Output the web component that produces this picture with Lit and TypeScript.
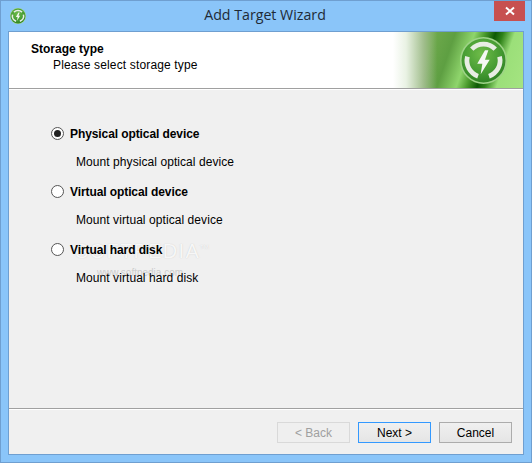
import { LitElement, html, css, svg } from "lit";
import { customElement } from "lit/decorators.js";

const bolt = (size: number, id: string) => html`<svg width=${size} height=${size} viewBox="0 0 60 60">
  <defs>
    <radialGradient id=${id} cx="45%" cy="35%" r="70%">
      <stop offset="0" stop-color="#6fbc49"/>
      <stop offset=".6" stop-color="#469c33"/>
      <stop offset="1" stop-color="#2c7f22"/>
    </radialGradient>
  </defs>
  <circle cx="30" cy="30" r="30" fill="#9fd388"/>
  <circle cx="30" cy="30" r="28" fill=${`url(#${id})`}/>
  ${svg`<g fill="none" stroke="#e8ede4" stroke-width="6">
    <path d="M15 15.5A21 21 0 0 1 45 15.5"/>
    <path d="M9.5 25A21 21 0 0 0 23 50"/>
    <path d="M50.5 25A21 21 0 0 1 37 50"/>
  </g>
  <path d="M31.9 17L22 34H28.5L26.4 47.7L37.9 29H31.9L36.2 17Z" fill="#f6f8f4"/>`}
</svg>`;

@customElement("app-root")
export class AppRoot extends LitElement {
  static styles = css`
    :host {
      display: block;
      width: 532px;
      height: 463px;
      font-family: "Liberation Sans", Arial, sans-serif;
      font-size: 12px;
      color: #000;
    }
    .window {
      box-sizing: border-box;
      width: 532px;
      height: 463px;
      display: flex;
      flex-direction: column;
      background: #8ac5f9;
      border: 1px solid #6f9fd0;
      padding: 0 7px 7px;
    }
    .titlebar {
      flex: none;
      height: 30px;
      display: grid;
      grid-template-columns: 1fr auto 1fr;
      align-items: start;
    }
    .app-icon {
      display: flex;
      margin: 7px 0 0 2px;
    }
    .title {
      font-family: "Open Sans", sans-serif;
      font-size: 14.2px;
      line-height: 20px;
      margin-top: 4px;
      margin-right: 2px;
      color: #1e2a36;
    }
    .close {
      justify-self: end;
      width: 31px;
      height: 20px;
      margin-right: -1px;
      background: #c75050;
      display: flex;
      align-items: center;
      justify-content: center;
    }
    .client {
      flex: 1;
      display: flex;
      flex-direction: column;
      background: #f0f0f0;
      border: 1px solid #6f9fd0;
      min-height: 0;
    }
    .header {
      flex: none;
      height: 57px;
      box-sizing: border-box;
      display: flex;
      justify-content: space-between;
      background: #fff;
      border-bottom: 1px solid #a0a0a0;
      box-shadow: 0 1px 0 #fff;
    }
    .head-text {
      padding: 9px 0 0 22px;
      line-height: 16px;
    }
    .head-title {
      font-weight: 700;
    }
    .head-sub {
      padding-left: 22px;
      letter-spacing: 0.15px;
    }
    .banner {
      width: 130px;
      height: 56px;
      display: flex;
      justify-content: flex-end;
      align-items: center;
      padding: 1px 16px 0 0;
      box-sizing: border-box;
      background:
        linear-gradient(90deg, #fff 0%, rgba(255,255,255,.85) 10%, rgba(200,205,190,.55) 24%, rgba(255,255,255,0) 34%),
        linear-gradient(109deg, #6ea94c 28%, #5e9f42 42%, #8fd56c 55%, #4a9a2c 62%, #0e5a05 69%, #2f8219 74%, #9bdf79 82%, #a5e481 100%);
    }
    .options {
      flex: 1;
      padding: 36px 0 0 42px;
      display: flex;
      flex-direction: column;
      gap: 13px;
      min-height: 0;
      position: relative;
      isolation: isolate;
    }
    .option {
      display: flex;
      flex-direction: column;
      gap: 13px;
    }
    .radio-row {
      display: flex;
      align-items: center;
      gap: 6px;
      font-weight: 700;
      line-height: 16px;
      letter-spacing: -0.09px;
    }
    .radio-label {
      padding-top: 1px;
      margin-bottom: -1px;
    }
    .radio {
      box-sizing: border-box;
      width: 13px;
      height: 13px;
      border: 1px solid #555;
      border-radius: 50%;
      background: #fff;
      display: flex;
      align-items: center;
      justify-content: center;
    }
    .dot {
      width: 7px;
      height: 7px;
      border-radius: 50%;
      background: #222;
    }
    .desc {
      padding-left: 25px;
      line-height: 16px;
      letter-spacing: 0.07px;
    }
    .footer {
      flex: none;
      height: 46px;
      box-sizing: border-box;
      border-top: 1px solid #a0a0a0;
      box-shadow: inset 0 1px 0 #fff;
      display: flex;
      justify-content: flex-end;
      gap: 8px;
      padding: 13px 11px 0 0;
    }
    .btn {
      box-sizing: border-box;
      width: 73px;
      height: 21px;
      display: flex;
      align-items: center;
      justify-content: center;
      border: 1px solid #acacac;
      background: linear-gradient(#f0f0f0, #e5e5e5);
      color: #000;
    }
    .btn.default {
      border-color: #3399ff;
    }
    .btn.disabled {
      border-color: #d9d9d9;
      background: #efefef;
      color: #a0a0a0;
    }
    .wm {
      position: absolute;
      z-index: -1;
      left: 66px;
      top: 152px;
      width: 130px;
      text-align: center;
      color: rgba(255, 255, 255, .85);
      pointer-events: none;
    }
    .wm-big {
      font-size: 20px;
      letter-spacing: 1.3px;
      line-height: 20px;
      text-shadow: 0 0 1px rgba(170, 170, 170, .6);
    }
    .wm-big sup {
      font-size: 6px;
      letter-spacing: 0;
      line-height: 0;
      vertical-align: 9px;
    }
    .wm-small {
      font-size: 10px;
      line-height: 14px;
      margin-top: 5px;
      color: rgba(170, 170, 170, .5);
    }
  `;

  render() {
    return html`<div class="window">
      <div class="titlebar">
        <div class="app-icon">${bolt(16, "g1")}</div>
        <div class="title">Add Target Wizard</div>
        <div class="close">
          <svg width="10" height="10" viewBox="0 0 10 10"><path d="M1 1.5L9 8.5M9 1.5L1 8.5" stroke="#fff" stroke-width="2"/></svg>
        </div>
      </div>
      <div class="client">
        <div class="header">
          <div class="head-text">
            <div class="head-title">Storage type</div>
            <div class="head-sub">Please select storage type</div>
          </div>
          <div class="banner">${bolt(47, "g2")}</div>
        </div>
        <div class="options">
          <div class="wm">
            <div class="wm-big">SOFTPEDIA<sup>TM</sup></div>
            <div class="wm-small">www.softpedia.com</div>
          </div>
          <div class="option">
            <div class="radio-row"><span class="radio"><span class="dot"></span></span><span class="radio-label">Physical optical device</span></div>
            <div class="desc">Mount physical optical device</div>
          </div>
          <div class="option">
            <div class="radio-row"><span class="radio"></span><span class="radio-label">Virtual optical device</span></div>
            <div class="desc">Mount virtual optical device</div>
          </div>
          <div class="option">
            <div class="radio-row"><span class="radio"></span><span class="radio-label">Virtual hard disk</span></div>
            <div class="desc">Mount virtual hard disk</div>
          </div>
        </div>
        <div class="footer">
          <div class="btn disabled">&lt; Back</div>
          <div class="btn default">Next &gt;</div>
          <div class="btn">Cancel</div>
        </div>
      </div>
    </div>`;
  }
}
